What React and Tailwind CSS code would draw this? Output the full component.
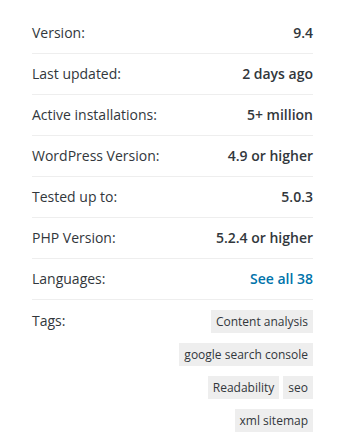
import React from "react";

const meta = [
  { label: "Version:", value: "9.4" },
  { label: "Last updated:", value: "2 days ago" },
  { label: "Active installations:", value: "5+ million" },
  { label: "WordPress Version:", value: "4.9 or higher" },
  { label: "Tested up to:", value: "5.0.3" },
  { label: "PHP Version:", value: "5.2.4 or higher" },
  { label: "Languages:", value: "See all 38", link: true },
];

const tags = ["Content analysis", "google search console", "Readability", "seo", "xml sitemap"];

function App() {
  return (
    <div
      className="min-h-[441px] bg-white px-[32px] pt-[13px] text-[#32373c]"
      style={{ fontFamily: '"Open Sans", "Noto Sans", sans-serif' }}
    >
      <ul className="w-[281px]">
        {meta.map((m) => (
          <li
            key={m.label}
            className="flex items-center justify-between border-b border-[#eeeeee] py-[10px] text-[14px] leading-[20px]"
          >
            <span>{m.label}</span>
            {m.link ? (
              <a href="#" className="font-semibold text-[#0073aa]">{m.value}</a>
            ) : (
              <strong className="font-semibold">{m.value}</strong>
            )}
          </li>
        ))}
        <li className="flex justify-between pt-[10px] text-[14px] leading-[20px]">
          <span className="pt-[1px]">Tags:</span>
          <div className="flex w-[160px] flex-wrap justify-end gap-x-[4px] gap-y-[10px]">
            {tags.map((t) => (
              <a
                key={t}
                href="#"
                className="bg-[#eeeeee] px-[5px] text-[12px] leading-[23px] text-[#32373c]"
              >
                {t}
              </a>
            ))}
          </div>
        </li>
      </ul>
    </div>
  );
}

export default App;
